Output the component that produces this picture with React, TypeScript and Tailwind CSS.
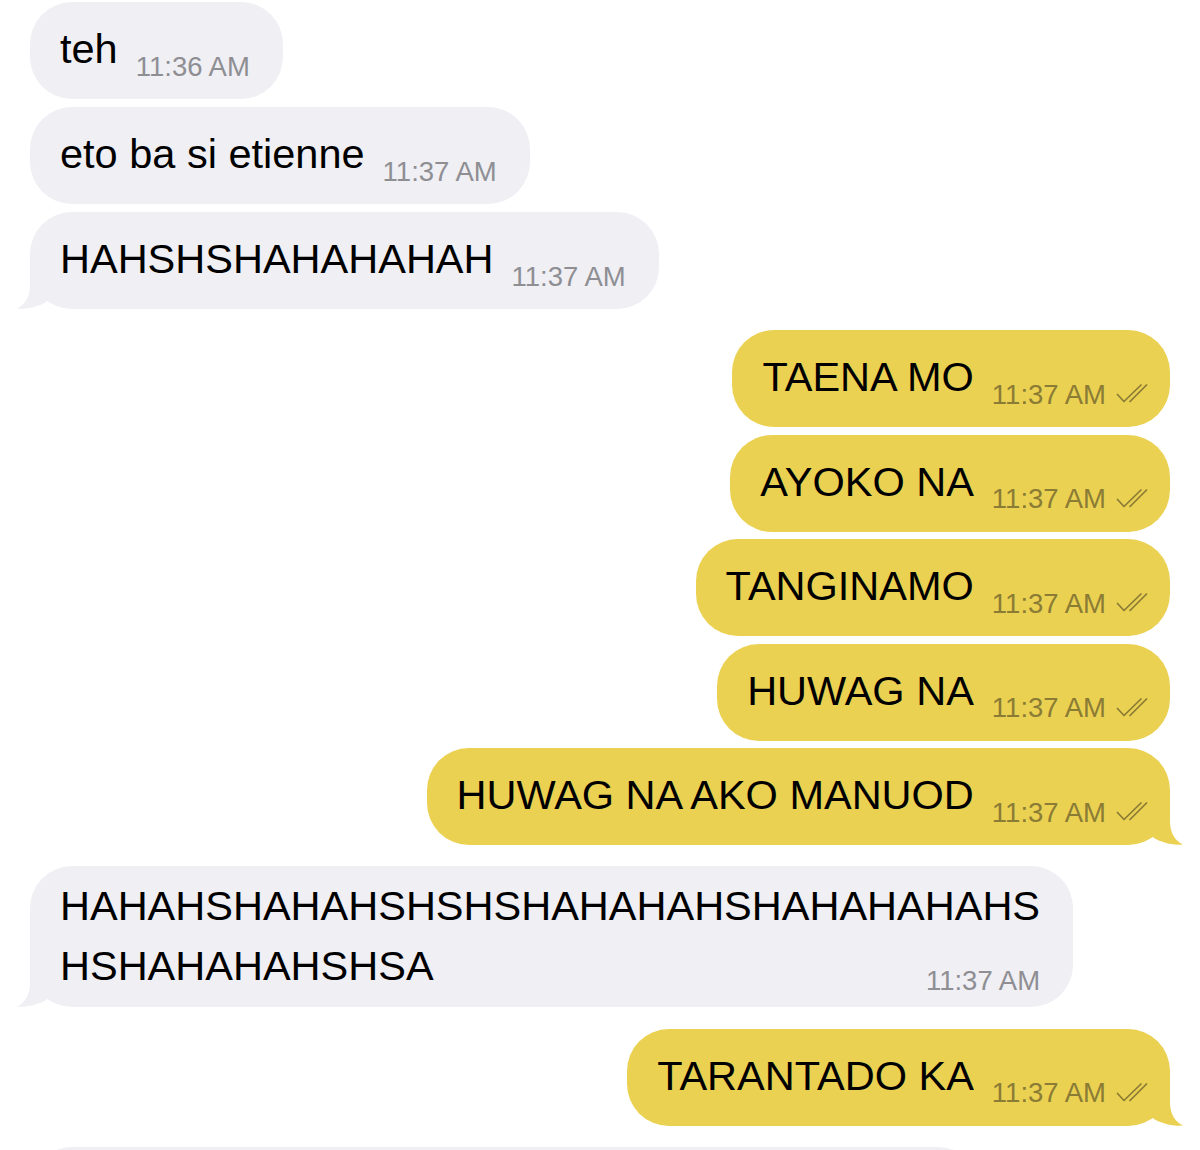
import React from 'react'

type Msg = {
  side: 'in' | 'out'
  lines: string[]
  time: string
  tail?: boolean
  gapTop: string
}

const messages: Msg[] = [
  { side: 'in', lines: ['teh'], time: '11:36 AM', gapTop: 'mt-0' },
  { side: 'in', lines: ['eto ba si etienne'], time: '11:37 AM', gapTop: 'mt-[8px]' },
  { side: 'in', lines: ['HAHSHSHAHAHAHAH'], time: '11:37 AM', tail: true, gapTop: 'mt-[8px]' },
  { side: 'out', lines: ['TAENA MO'], time: '11:37 AM', gapTop: 'mt-[21px]' },
  { side: 'out', lines: ['AYOKO NA'], time: '11:37 AM', gapTop: 'mt-[7.5px]' },
  { side: 'out', lines: ['TANGINAMO'], time: '11:37 AM', gapTop: 'mt-[7.5px]' },
  { side: 'out', lines: ['HUWAG NA'], time: '11:37 AM', gapTop: 'mt-[7.5px]' },
  { side: 'out', lines: ['HUWAG NA AKO MANUOD'], time: '11:37 AM', tail: true, gapTop: 'mt-[7.5px]' },
  {
    side: 'in',
    lines: ['HAHAHSHAHAHSHSHSHAHAHAHSHAHAHAHAHS', 'HSHAHAHAHSHSA'],
    time: '11:37 AM',
    tail: true,
    gapTop: 'mt-[21px]',
  },
  { side: 'out', lines: ['TARANTADO KA'], time: '11:37 AM', tail: true, gapTop: 'mt-[22px]' },
]

const GRAY = '#efeff4'
const YELLOW = '#ebd152'

const Checks = () => (
  <svg width="32" height="19" viewBox="0 0 32 19" fill="none" className="mb-[1px]">
    <path d="M1.5 10.5 L8 17.5 L25 1" stroke="#8a7b35" strokeWidth="1.7" strokeLinecap="round" strokeLinejoin="round" />
    <path d="M14 17.5 L30.5 1" stroke="#8a7b35" strokeWidth="1.7" strokeLinecap="round" />
  </svg>
)

// bubble tail, drawn for the right side; flipped for the left
const Tail = ({ side }: { side: 'in' | 'out' }) => (
  <svg
    width="56"
    height="50"
    viewBox="0 0 56 50"
    className={
      side === 'out'
        ? 'absolute right-[-16px] bottom-0'
        : 'absolute left-[-16px] bottom-0 -scale-x-100'
    }
  >
    <path
      d="M40 0 V26 C40 37 44 45 53 49.6 C45 50.4 30 48 22 41.5 L22 20 Z"
      fill={side === 'out' ? YELLOW : GRAY}
    />
  </svg>
)

const Time = ({ side, time }: { side: 'in' | 'out'; time: string }) => (
  <span
    className={`flex items-center gap-[10px] text-[27.5px] leading-none whitespace-nowrap -mb-[1px] ${
      side === 'out' ? 'text-[#8a7b35]' : 'text-[#8e8e93]'
    }`}
  >
    {time}
    {side === 'out' && <Checks />}
  </span>
)

const Bubble = ({ msg }: { msg: Msg }) => {
  const out = msg.side === 'out'
  const multi = msg.lines.length > 1
  return (
    <div
      className={`relative rounded-[42px] ${out ? 'self-end bg-[#ebd152] pl-[30px] pr-[22px]' : 'self-start bg-[#efeff4] pl-[30px] pr-[33px]'} ${
        multi ? 'pt-[10px] pb-[13px]' : 'pt-[17px] pb-[20px]'
      } ${msg.gapTop}`}
    >
      {msg.tail && <Tail side={msg.side} />}
      {multi ? (
        <div className="relative flex flex-col">
          <p className="text-[41.5px] leading-[60px] text-black">
            {msg.lines.map((l, i) => (
              <React.Fragment key={i}>
                {l}
                {i < msg.lines.length - 1 && <br />}
              </React.Fragment>
            ))}
          </p>
          <div className="self-end -mt-[29px]">
            <Time side={msg.side} time={msg.time} />
          </div>
        </div>
      ) : (
        <div className="relative flex items-end gap-[18px]">
          <span className="text-[41.5px] leading-[60px] text-black whitespace-nowrap">{msg.lines[0]}</span>
          <Time side={msg.side} time={msg.time} />
        </div>
      )}
    </div>
  )
}

export default function App() {
  return (
    <div
      className="w-[1200px] h-[1150px] overflow-hidden bg-white"
      style={{ fontFamily: '"Liberation Sans", Arial, sans-serif' }}
    >
      <div className="flex flex-col px-[30px] pt-[2px]">
        {messages.map((m, i) => (
          <Bubble key={i} msg={m} />
        ))}
        {/* next message, cut off by the bottom of the screen */}
        <div className="self-start mt-[21px] w-[950px] h-[97px] rounded-[42px] bg-[#efeff4]" />
      </div>
    </div>
  )
}
